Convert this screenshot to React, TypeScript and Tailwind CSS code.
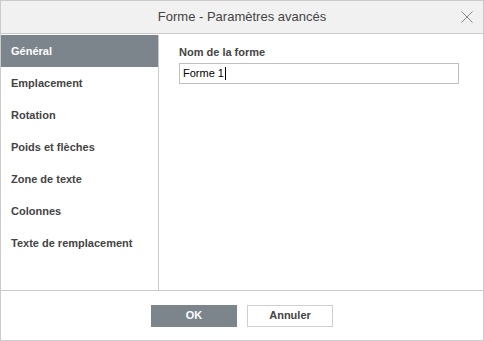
import React from "react";

const tabs = [
  "Général",
  "Emplacement",
  "Rotation",
  "Poids et flèches",
  "Zone de texte",
  "Colonnes",
  "Texte de remplacement",
];

export default function App() {
  return (
    <div
      className="w-[484px] h-[341px] border border-[#cbcbcb] bg-white flex flex-col text-[#444]"
      style={{ fontFamily: '"Liberation Sans", Arial, sans-serif' }}
    >
      <div className="h-[33px] shrink-0 bg-[#f1f1f1] border-b border-[#cbcbcb] flex items-center justify-center relative">
        <span className="text-[13px]">Forme - Paramètres avancés</span>
        <svg
          className="absolute right-[10px] top-[10px]"
          width="12"
          height="12"
          viewBox="0 0 12 12"
        >
          <path d="M0.5 0.5L11.5 11.5M11.5 0.5L0.5 11.5" stroke="#888" strokeWidth="1" fill="none" />
        </svg>
      </div>
      <div className="flex flex-1 pt-px">
        <div className="w-[158px] shrink-0 border-r border-[#cbcbcb] flex flex-col">
          {tabs.map((t, i) => (
            <div
              key={t}
              className={`h-[32px] flex items-center pl-[10px] text-[11px] font-bold ${
                i === 0 ? "bg-[#7d858c] text-white" : ""
              }`}
            >
              {t}
            </div>
          ))}
        </div>
        <div className="flex-1 pl-[20px] pt-[10px]">
          <div className="text-[11px] font-bold leading-[14px] mb-[4px]">Nom de la forme</div>
          <div className="w-[280px] h-[21px] border border-[#c0c0c0] flex items-center pl-[3px] text-[11px] text-black">
            Forme 1<span className="inline-block w-px h-[13px] bg-black ml-px" />
          </div>
        </div>
      </div>
      <div className="h-[50px] shrink-0 border-t border-[#cbcbcb] flex items-center justify-center gap-[10px]">
        <button className="w-[86px] h-[22px] bg-[#7d858c] text-white text-[11px] font-bold">OK</button>
        <button className="w-[86px] h-[22px] border border-[#cfcfcf] bg-white text-[11px] font-bold text-[#444]">
          Annuler
        </button>
      </div>
    </div>
  );
}
